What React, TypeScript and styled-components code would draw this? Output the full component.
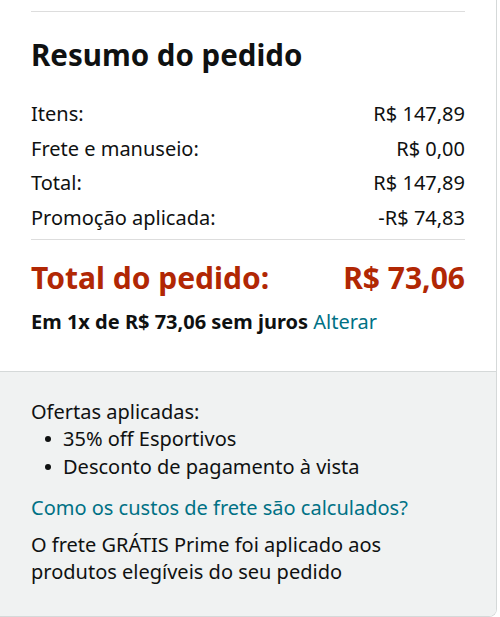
import React from 'react';
import styled, { createGlobalStyle } from 'styled-components';

const GlobalStyle = createGlobalStyle`
    html, body {
        margin: 0;
        padding: 0;
        background: #FFFFFF;
    }

    body {
        font-family: "Noto Sans", "Open Sans", Arial, sans-serif;
        color: #0F1111;
    }
`;

const Card = styled.div`
    width: 507px;
    margin-left: -10px;
    box-sizing: border-box;
    border: 1px solid #D5D9D9;
    border-top: none;
    border-radius: 0 0 8px 8px;
    overflow: hidden;
`;

const Summary = styled.section`
    padding: 11px 31px 0 40px;
    background: #FFFFFF;
`;

const Divider = styled.hr`
    margin: 0;
    border: none;
    border-top: 1px solid #DDDDDD;
`;

const Title = styled.h2`
    margin: 25px 0 23px;
    font-size: 29.5px;
    font-weight: 700;
    line-height: 36px;
`;

const Rows = styled.div`
    display: flex;
    flex-direction: column;
    padding-bottom: 4px;
`;

const Row = styled.div`
    display: flex;
    justify-content: space-between;
    align-items: center;
    height: 34.7px;
    font-size: 20px;
`;

const TotalRow = styled.div`
    display: flex;
    justify-content: space-between;
    align-items: center;
    margin-top: 18px;
    font-size: 30px;
    font-weight: 700;
    line-height: 40px;
    color: #B12704;
`;

const Installment = styled.p`
    margin: 10px 0 0;
    padding-bottom: 35px;
    font-size: 20px;
    font-weight: 700;
    line-height: 28px;
`;

const Link = styled.a<{ $block?: boolean }>`
    display: ${(props) => props.$block ? 'block' : 'inline'};
    font-weight: 400;
    color: #007185;
    text-decoration: none;
    cursor: pointer;
`;

const Details = styled.section`
    padding: 26px 31px 30px 40px;
    border-top: 1px solid #D5D9D9;
    background: #F0F2F2;
    font-size: 20px;
    line-height: 27.5px;
`;

const OffersTitle = styled.div``;

const OfferList = styled.ul`
    margin: 0;
    padding: 0;
    list-style: none;
`;

const Offer = styled.li`
    display: flex;
    align-items: center;

    &::before {
        content: '';
        flex: none;
        width: 6px;
        height: 6px;
        margin: 0 12px 0 14px;
        border-radius: 50%;
        background: #0F1111;
    }
`;

const ShippingLink = styled(Link)`
    margin-top: 14px;
`;

const Note = styled.p`
    margin: 9px 0 0;
`;

const rows = [
    { label: 'Itens:', value: 'R$ 147,89' },
    { label: 'Frete e manuseio:', value: 'R$ 0,00' },
    { label: 'Total:', value: 'R$ 147,89' },
    { label: 'Promoção aplicada:', value: '-R$ 74,83' },
];

const offers = ['35% off Esportivos', 'Desconto de pagamento à vista'];

const App = () => {
    return (
        <>
            <GlobalStyle />
            <Card>
                <Summary>
                    <Divider />
                    <Title>Resumo do pedido</Title>
                    <Rows>
                        {rows.map((row) => (
                            <Row key={row.label}>
                                <span>{row.label}</span>
                                <span>{row.value}</span>
                            </Row>
                        ))}
                    </Rows>
                    <Divider />
                    <TotalRow>
                        <span>Total do pedido:</span>
                        <span>R$ 73,06</span>
                    </TotalRow>
                    <Installment>
                        Em 1x de R$ 73,06 sem juros <Link>Alterar</Link>
                    </Installment>
                </Summary>
                <Details>
                    <OffersTitle>Ofertas aplicadas:</OffersTitle>
                    <OfferList>
                        {offers.map((offer) => (
                            <Offer key={offer}>{offer}</Offer>
                        ))}
                    </OfferList>
                    <ShippingLink $block>Como os custos de frete são calculados?</ShippingLink>
                    <Note>O frete GRÁTIS Prime foi aplicado aos produtos elegíveis do seu pedido</Note>
                </Details>
            </Card>
        </>
    );
};

export default App;
